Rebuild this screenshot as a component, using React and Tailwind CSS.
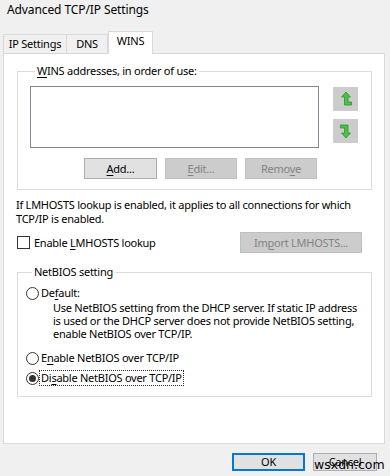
import React from 'react'

const font = { fontFamily: '"Noto Sans", "Segoe UI", sans-serif' }

function UpIcon(){
  return (
    <svg width="14" height="16" viewBox="0 0 14 16">
      <polygon points="7,1 11.5,6 9,6 9,11 12.5,11 12.5,14 5.5,14 5.5,6 2.5,6" fill="#47c447" stroke="#2f8f2f" strokeWidth="0.8" />
    </svg>
  )
}

function DownIcon(){
  return (
    <svg width="14" height="16" viewBox="0 0 14 16">
      <polygon points="7,15 11.5,10 9,10 9,2 1.5,2 1.5,5 5.5,5 5.5,10 2.5,10" fill="#47c447" stroke="#2f8f2f" strokeWidth="0.8" />
    </svg>
  )
}

function Btn({ children, disabled, className = '' }){
  return (
    <div className={`flex items-center justify-center border ${disabled ? 'bg-[#cccccc] border-[#bfbfbf] text-[#838383]' : 'bg-[#e1e1e1] border-[#adadad] text-black'} ${className}`}>
      {children}
    </div>
  )
}

function Radio({ checked }){
  return (
    <div className="w-[13px] h-[13px] rounded-full border border-[#333] bg-white flex items-center justify-center shrink-0">
      {checked && <div className="w-[7px] h-[7px] rounded-full bg-[#333]" />}
    </div>
  )
}

export default function App(){
  return (
    <div className="relative w-[390px] h-[476px] bg-[#f0f0f0] text-black flex flex-col overflow-hidden text-[11px] tracking-[-0.25px] whitespace-nowrap" style={font}>
      {/* title */}
      <div className="h-[31px] pl-[7px] pt-[1px] text-[12px] leading-[18px] tracking-[-0.1px]">Advanced TCP/IP Settings</div>

      {/* tabs */}
      <div className="flex items-end h-[22px] pl-[3px]">
        <div className="h-[19px] flex items-center justify-center border border-b-0 border-[#d9d9d9] bg-[#f0f0f0] w-[64px]">IP Settings</div>
        <div className="h-[19px] flex items-center justify-center border border-b-0 border-l-0 border-[#d9d9d9] bg-[#f0f0f0] w-[41px]">DNS</div>
        <div className="relative z-10 -mb-px h-[23px] pb-[3px] flex items-center justify-center border border-b-0 border-[#d9d9d9] bg-white w-[45px]">WINS</div>
      </div>

      {/* panel */}
      <div className="ml-[3px] mr-[5px] h-[391px] border border-[#d9d9d9] bg-white leading-[14px]">
        <fieldset className="mt-[10px] ml-[13px] mr-[12px] border border-[#dcdcdc] pl-[12px] pr-[13px] pb-[10px]">
          <legend className="ml-[5px] px-[2px]"><u className="underline-offset-2">W</u>INS addresses, in order of use:</legend>
          <div className="flex gap-[14px] mt-[8px]">
            <div className="w-[289px] h-[62px] border border-[#828790] bg-white" />
            <div className="flex flex-col gap-[8px] pt-[1px]">
              <div className="w-[25px] h-[24px] bg-[#cccccc] flex items-center justify-center"><UpIcon /></div>
              <div className="w-[25px] h-[24px] bg-[#cccccc] flex items-center justify-center"><DownIcon /></div>
            </div>
          </div>
          <div className="flex gap-[8px] mt-[10px] ml-[54px]">
            <Btn className="w-[73px] h-[21px]"><span><u className="underline-offset-2">A</u>dd...</span></Btn>
            <Btn disabled className="w-[72px] h-[21px]"><span><u className="underline-offset-2">E</u>dit...</span></Btn>
            <Btn disabled className="w-[72px] h-[21px]"><span>Remo<u className="underline-offset-2">v</u>e</span></Btn>
          </div>
        </fieldset>

        <p className="mt-[8px] ml-[12px]">If LMHOSTS lookup is enabled, it applies to all connections for which<br />TCP/IP is enabled.</p>

        <div className="flex items-center mt-[6px] ml-[13px] mr-[22px] h-[21px]">
          <div className="w-[13px] h-[13px] border border-[#333] bg-white shrink-0" />
          <span className="ml-[4px]">Enable <u className="underline-offset-2">L</u>MHOSTS lookup</span>
          <Btn disabled className="ml-auto w-[122px] h-[21px]"><span>Im<u className="underline-offset-2">p</u>ort LMHOSTS...</span></Btn>
        </div>

        <fieldset className="mt-[12px] ml-[13px] mr-[12px] border border-[#dcdcdc] pl-[8px] pb-[10px]">
          <legend className="ml-[6px] px-[2px]">NetBIOS setting</legend>
          <div className="flex items-center mt-[7px] h-[14px]">
            <Radio />
            <span className="ml-[2px]">De<u className="underline-offset-2">f</u>ault:</span>
          </div>
          <p className="ml-[27px] mt-[1px] leading-[13px]">
            Use NetBIOS setting from the DHCP server. If static IP address<br />
            is used or the DHCP server does not provide NetBIOS setting,<br />
            enable NetBIOS over TCP/IP.
          </p>
          <div className="flex items-center mt-[11px] h-[14px]">
            <Radio />
            <span className="ml-[2px]">E<u className="underline-offset-2">n</u>able NetBIOS over TCP/IP</span>
          </div>
          <div className="flex items-center mt-[5px] h-[16px]">
            <Radio checked />
            <span className="ml-[1px] px-[1px] outline outline-1 outline-dotted outline-[#333]">Di<u className="underline-offset-2">s</u>able NetBIOS over TCP/IP</span>
          </div>
        </fieldset>
      </div>

      {/* footer */}
      <div className="flex justify-end gap-[8px] mt-[9px] mr-[13px]">
        <div className="w-[73px] h-[18px] flex items-center justify-center bg-[#e1e1e1] border-2 border-[#0078d7]">OK</div>
        <div className="w-[64px] h-[18px] flex items-center justify-center bg-[#e1e1e1] border border-[#adadad]">Cancel</div>
      </div>

      <div className="absolute left-[314px] top-[457px] text-[12.5px] leading-[16px] tracking-normal text-black" style={{ fontFamily: '"DejaVu Sans", sans-serif' }}>wsxdn.com</div>
    </div>
  )
}
